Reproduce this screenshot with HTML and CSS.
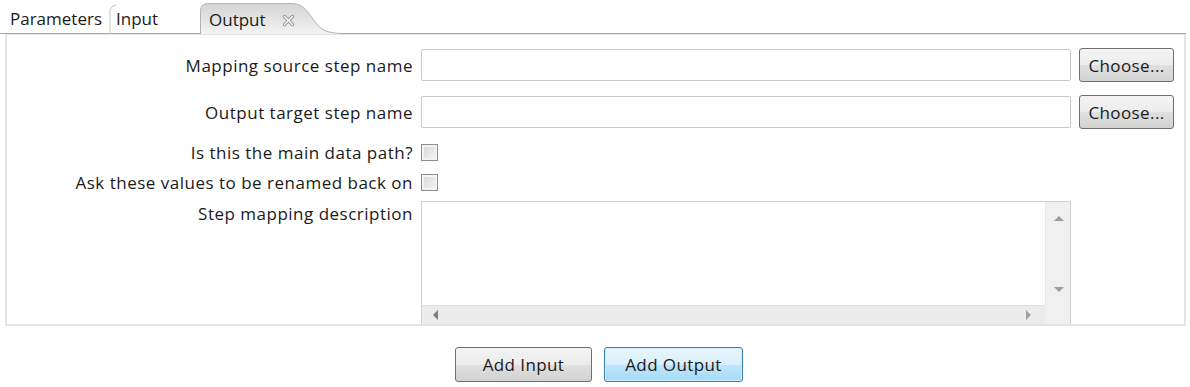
FILE: index.html
```html
<!DOCTYPE html>
<html>
<head lang="en">
    <meta charset="UTF-8">
    <title>Mapping output</title>
    <link rel="stylesheet" href="styles.css">
</head>
<body>

<main>
    <nav class="tabs">
        <div class="tab tab-params">Parameters</div>
        <div class="tab tab-input">
            <svg class="tab-edge" width="8" height="30" viewBox="0 0 8 30">
                <path d="M1 30 L1 8 Q1 2 7 1" fill="none" stroke="#c4c4c4" stroke-width="1"/>
            </svg>
            Input
        </div>
        <div class="tab tab-active">
            <svg class="tab-shape" width="140" height="31" viewBox="0 0 140 31">
                <defs>
                    <linearGradient id="tabfill" x1="0" y1="0" x2="0" y2="1">
                        <stop offset="0" stop-color="#d4d4d4"/>
                        <stop offset="1" stop-color="#f3f3f3"/>
                    </linearGradient>
                </defs>
                <path d="M0.5 31 L0.5 8 Q0.5 0.5 8 0.5 L92 0.5 C104 0.5 108 10 116 20 C122 28 128 29.5 139.5 30.5 L139.5 31 Z" fill="url(#tabfill)"/>
                <path d="M0.5 31 L0.5 8 Q0.5 0.5 8 0.5 L92 0.5 C104 0.5 108 10 116 20 C122 28 128 29.5 140 30.5" fill="none" stroke="#b4b4b4" stroke-width="1"/>
            </svg>
            <span class="tab-label">Output</span>
            <svg class="tab-close" width="13" height="13" viewBox="0 0 13 13">
                <path d="M2.5 2.5 L10.5 10.5 M10.5 2.5 L2.5 10.5" stroke="#9a9a9a" stroke-width="3.4" stroke-linecap="round"/>
                <path d="M2.5 2.5 L10.5 10.5 M10.5 2.5 L2.5 10.5" stroke="#ffffff" stroke-width="1.4" stroke-linecap="round"/>
            </svg>
        </div>
        <div class="tab-rest"></div>
    </nav>

    <section class="panel">
        <div class="row row-field">
            <label class="label">Mapping source step name</label>
            <div class="field"></div>
            <button class="btn choose">Choose...</button>
        </div>
        <div class="row row-field">
            <label class="label">Output target step name</label>
            <div class="field"></div>
            <button class="btn choose">Choose...</button>
        </div>
        <div class="row row-check first-check">
            <label class="label">Is this the main data path?</label>
            <span class="check"></span>
        </div>
        <div class="row row-check">
            <label class="label">Ask these values to be renamed back on</label>
            <span class="check"></span>
        </div>
        <div class="row row-area">
            <label class="label">Step mapping description</label>
            <div class="textarea">
                <div class="ta-body">
                    <div class="ta-text"></div>
                    <div class="vscroll">
                        <span class="arrow up"></span>
                        <span class="arrow down"></span>
                    </div>
                </div>
                <div class="hscroll-row">
                    <div class="hscroll">
                        <span class="arrow left"></span>
                        <span class="arrow right"></span>
                    </div>
                    <div class="corner"></div>
                </div>
            </div>
        </div>
    </section>

    <footer class="actions">
        <button class="btn action">Add Input</button>
        <button class="btn action default">Add Output</button>
    </footer>
</main>

</body>
</html>
```

FILE: styles.css
```css
* {
    box-sizing: border-box;
}
body {
    margin: 0;
    background-color: #ffffff;
    font-family: "Open Sans", "Noto Sans", sans-serif;
    font-size: 17px;
    letter-spacing: 0.5px;
    color: #1a1a1a;
}
main {
    width: 1190px;
    height: 387px;
    overflow: hidden;
}

/* tab strip */
.tabs {
    display: flex;
    align-items: flex-end;
    height: 34px;
}
.tab {
    position: relative;
    height: 34px;
    line-height: 38px;
    border-bottom: 1px solid #a8a8a8;
    white-space: nowrap;
    letter-spacing: 0;
}
.tab-params {
    width: 110px;
    padding-left: 10px;
}
.tab-input {
    width: 90px;
    padding-left: 6px;
}
.tab-edge {
    position: absolute;
    left: -1px;
    top: 4px;
}
.tab-active {
    width: 140px;
    height: 31px;
    line-height: 34px;
    border-bottom: none;
}
.tab-shape {
    position: absolute;
    left: 0;
    top: 0;
}
.tab-label {
    position: relative;
    margin-left: 9px;
}
.tab-close {
    position: relative;
    margin-left: 12px;
    top: 1px;
}
.tab-rest {
    flex: 1;
    height: 1px;
    margin-right: 4px;
    background-color: #a8a8a8;
}

/* main panel */
.panel {
    margin: 0 4px 0 5px;
    height: 292px;
    padding-top: 13px;
    border: 2px solid #e4e4e4;
    border-top: 1px solid #e4e4e4;
    overflow: hidden;
}
.row {
    display: flex;
    align-items: center;
    gap: 8px;
}
.label {
    width: 406px;
    flex-shrink: 0;
    text-align: right;
    white-space: nowrap;
}
.row-field {
    height: 34px;
    margin-bottom: 13px;
}
.row-check {
    height: 30px;
}
.first-check {
    margin-top: -5px;
}
.row-area {
    align-items: flex-start;
    margin-top: 4px;
}
.row-area .label {
    padding-top: 1px;
}
.field {
    width: 650px;
    height: 32px;
    border: 1px solid #c8c8c8;
    border-radius: 2px;
    background-color: #ffffff;
}
.btn {
    font-family: "Open Sans", "Noto Sans", sans-serif;
    font-size: 17px;
    letter-spacing: 0.4px;
    color: #1a1a1a;
    border: 1px solid #707070;
    border-radius: 3px;
    background: linear-gradient(#f4f4f4 0%, #ececec 50%, #e0e0e0 51%, #d2d2d2 100%);
    padding: 0;
}
.choose {
    width: 95px;
    height: 34px;
}
.check {
    width: 17px;
    height: 17px;
    border: 1px solid #8e8f8f;
    background: linear-gradient(135deg, #d6d6d6, #f6f6f6);
    box-shadow: inset 0 0 0 2px #f2f2f2;
}

/* description box */
.textarea {
    width: 650px;
    height: 124px;
    border: 1px solid #d0d0d0;
    border-bottom: none;
    display: flex;
    flex-direction: column;
}
.ta-body {
    flex: 1;
    display: flex;
}
.ta-text {
    flex: 1;
}
.vscroll {
    position: relative;
    width: 25px;
    background-color: #f0f0f0;
    border-left: 1px solid #e6e6e6;
}
.hscroll-row {
    height: 20px;
    display: flex;
}
.hscroll {
    position: relative;
    flex: 1;
    background-color: #ececec;
    border-top: 1px solid #e0e0e0;
}
.corner {
    width: 25px;
    background-color: #f0f0f0;
}
.arrow {
    position: absolute;
    width: 0;
    height: 0;
}
.arrow.up {
    left: 8px;
    top: 14px;
    border-left: 5px solid transparent;
    border-right: 5px solid transparent;
    border-bottom: 5px solid #9c9c9c;
}
.arrow.down {
    left: 8px;
    bottom: 13px;
    border-left: 5px solid transparent;
    border-right: 5px solid transparent;
    border-top: 5px solid #9c9c9c;
}
.arrow.left {
    left: 11px;
    top: 4px;
    border-top: 5px solid transparent;
    border-bottom: 5px solid transparent;
    border-right: 5px solid #7c7c7c;
}
.arrow.right {
    right: 14px;
    top: 4px;
    border-top: 5px solid transparent;
    border-bottom: 5px solid transparent;
    border-left: 5px solid #a0a0a0;
}

/* bottom buttons */
.actions {
    display: flex;
    justify-content: center;
    gap: 12px;
    padding: 21px 0 0 8px;
}
.action {
    width: 137px;
    height: 35px;
}
.action.default {
    width: 139px;
    border-color: #3c7fb1;
    background: linear-gradient(#eaf6fd 0%, #d9f0fc 50%, #bee6fd 51%, #a7d9f5 100%);
    box-shadow: inset 0 0 0 1px #cdeefd;
}
```
